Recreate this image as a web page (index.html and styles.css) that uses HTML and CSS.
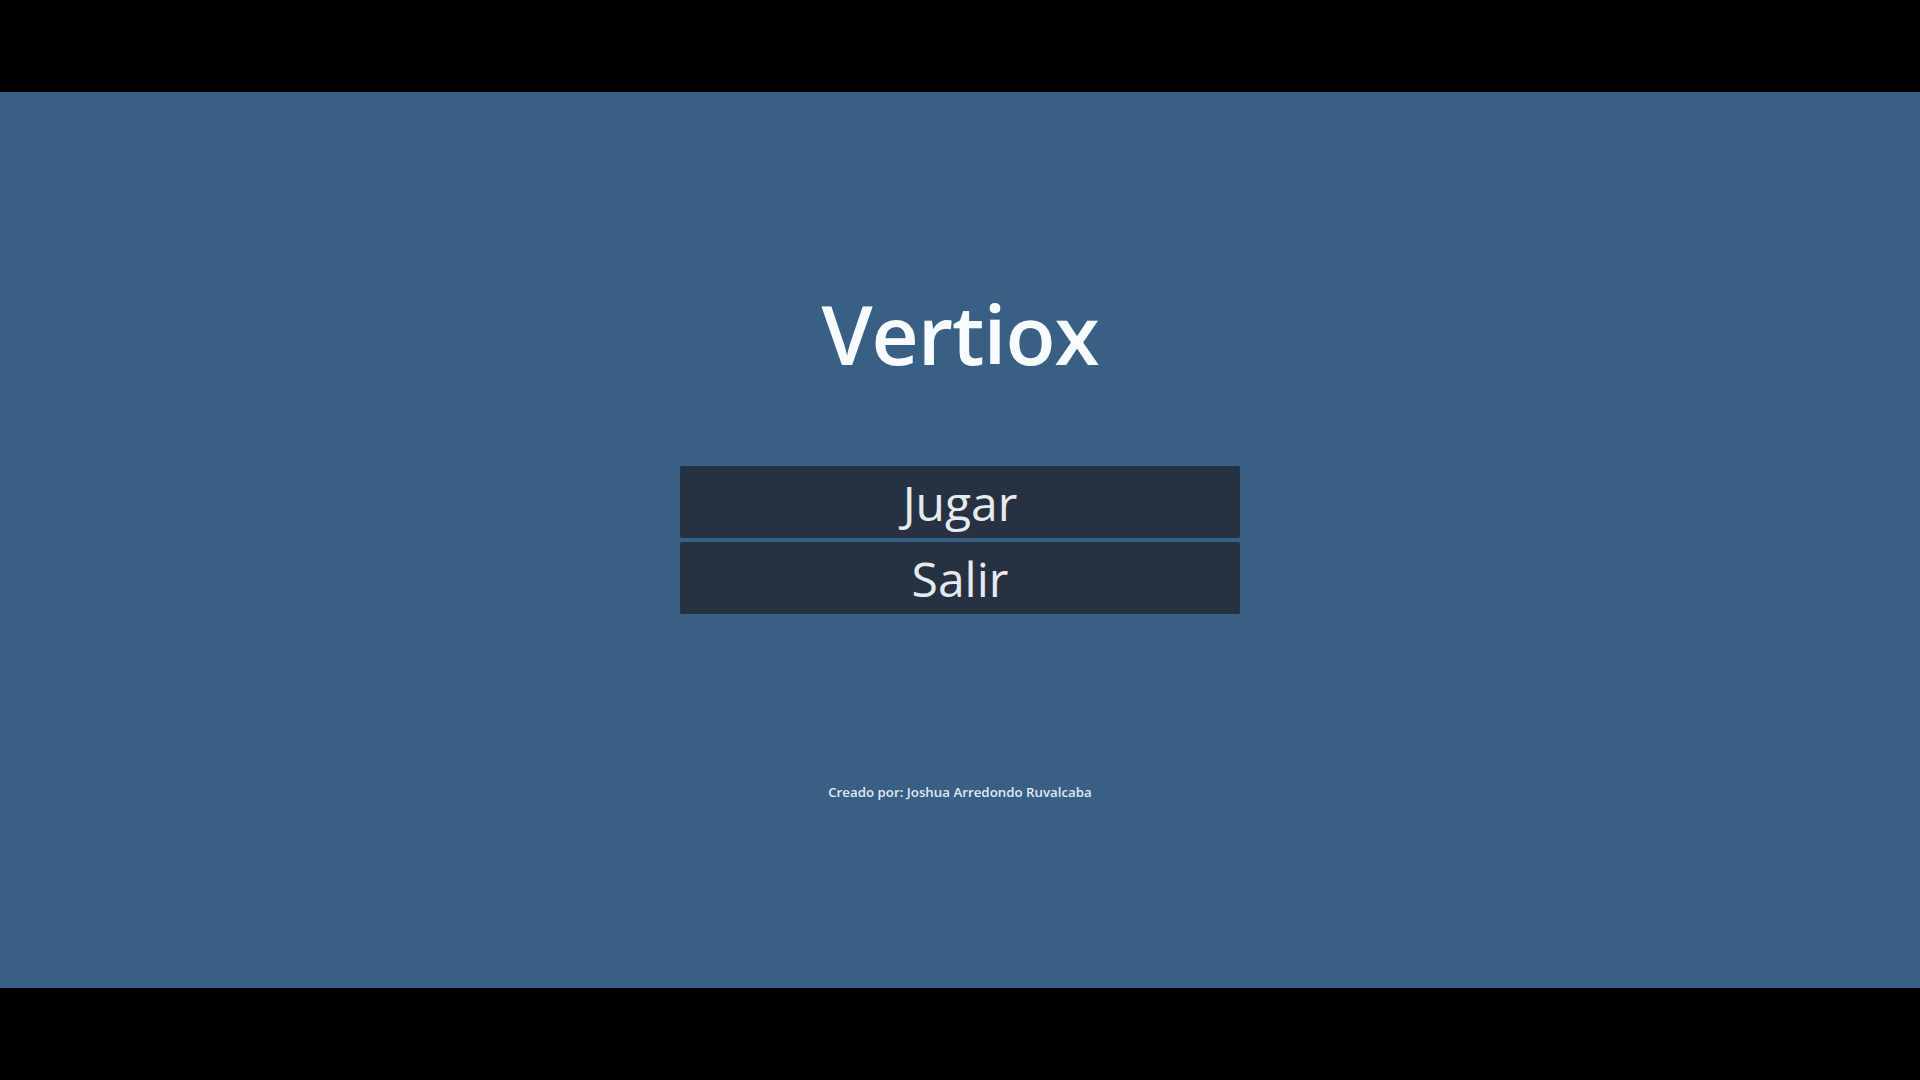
FILE: index.html
```html
<!DOCTYPE html>
<html lang="es">
<head>
<meta charset="utf-8">
<title>Vertiox</title>
<link rel="stylesheet" href="styles.css">
</head>
<body>
<div class="bar"></div>
<main class="screen">
  <h1 class="title">Vertiox</h1>
  <nav class="menu">
    <button class="btn">Jugar</button>
    <button class="btn">Salir</button>
  </nav>
  <p class="credit">Creado por: Joshua Arredondo Ruvalcaba</p>
</main>
<div class="bar"></div>
</body>
</html>
```
FILE: styles.css
```css
html, body {
  margin: 0;
  padding: 0;
  background: #000;
  height: 100%;
  overflow: hidden;
}
body {
  display: flex;
  flex-direction: column;
  font-family: "Open Sans", "Noto Sans", sans-serif;
}
.bar {
  height: 92px;
  background: #000;
  flex: none;
}
.screen {
  height: 896px;
  flex: none;
  background: #3a5f85;
  display: flex;
  flex-direction: column;
  align-items: center;
  padding-top: 200px;
  box-sizing: border-box;
}
.title {
  margin: 0;
  font-size: 82px;
  line-height: 82px;
  font-weight: 600;
  letter-spacing: -1px;
  color: #f8fbff;
}
.menu {
  margin-top: 92px;
  display: flex;
  flex-direction: column;
  gap: 4px;
  width: 560px;
}
.btn {
  height: 72px;
  border: none;
  border-radius: 2px;
  background: #263241;
  color: #e6eaf0;
  font-family: "Open Sans", "Noto Sans", sans-serif;
  font-size: 48px;
  font-weight: 500;
  line-height: 72px;
  padding: 1px 0 0;
  margin: 0;
}
.credit {
  margin: 168px 0 0;
  font-size: 13.3px;
  line-height: 20px;
  font-weight: 600;
  color: #dfe9f5;
}
```
